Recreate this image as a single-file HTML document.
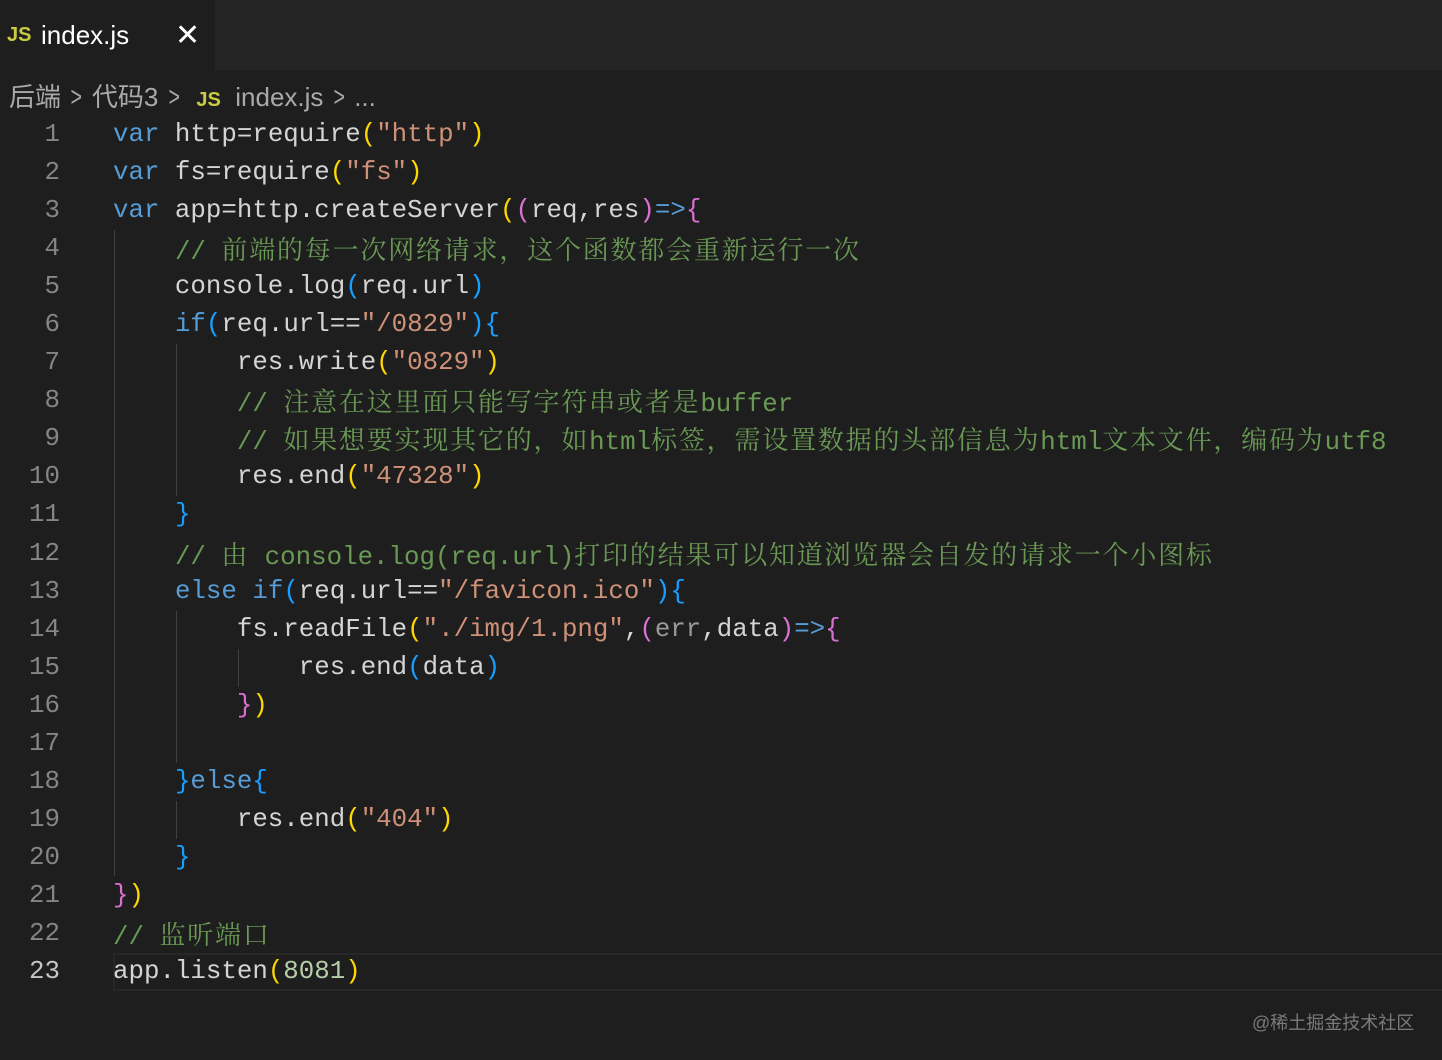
<!DOCTYPE html>
<html><head><meta charset="utf-8"><style>
body{margin:0;width:1442px;height:1060px;background:#1e1e1e;overflow:hidden;position:relative;font-family:"Liberation Mono",monospace;}
.tabbar{position:absolute;left:0;top:0;width:1442px;height:70px;background:#252526}
.tab{position:absolute;left:0;top:0;width:215px;height:70px;background:#1e1e1e}
.ui{font-family:"Liberation Sans","Noto Sans CJK SC",sans-serif}
.js{color:#cbcb41;font-weight:bold;font-family:"Liberation Sans",sans-serif}
.ln{position:absolute;left:0;width:60px;text-align:right;color:#858585;font-size:25.8px;line-height:38px;height:38px}
.cl{position:absolute;left:113px;font-size:25.8px;line-height:38px;height:38px;white-space:pre;color:#d4d4d4}
.k{color:#569cd6}.s{color:#ce9178}.c{color:#6a9955}.n{color:#b5cea8}
.y{color:#ffd700}.p{color:#da70d6}.b{color:#179fff}.g{color:#9a9a9a}
.z{font-family:"Noto Serif CJK SC",serif;font-size:26px;letter-spacing:1.8px}
.gd{position:absolute;width:1px;background:#404040}
.ch{display:inline-block;transform:scaleX(0.7);font-size:28px}
</style></head><body>
<div class="tabbar"></div>
<div class="tab"></div>
<div class="ui" style="position:absolute;left:7px;top:24px;font-size:20px" ><span class="js">JS</span></div>
<div class="ui" style="position:absolute;left:41px;top:20px;font-size:26px;color:#fff">index.js</div>
<div class="ui" style="position:absolute;left:175px;top:18px;font-size:30px;color:#fff">✕</div>
<div class="ui" style="position:absolute;left:9px;top:77px;font-size:26px;color:#a9a9a9;white-space:pre">后端 <span class="ch">&gt;</span> 代码3 <span class="ch">&gt;</span>  <span class="js" style="font-size:20px">JS</span>  index.js <span class="ch">&gt;</span> ...</div>

<div class="gd" style="left:114px;top:230px;height:646px"></div>
<div class="gd" style="left:176px;top:344px;height:152px"></div>
<div class="gd" style="left:176px;top:611px;height:152px"></div>
<div class="gd" style="left:238px;top:649px;height:38px"></div>
<div class="gd" style="left:176px;top:801px;height:38px"></div>
<div style="position:absolute;left:113px;top:953px;width:1329px;height:34px;border:2px solid #282828;border-right:none"></div>

<div class="ln" style="top:116px">1</div><div class="cl" style="top:116px"><span class="k">var</span> http=require<span class="y">(</span><span class="s">"http"</span><span class="y">)</span></div>
<div class="ln" style="top:154px">2</div><div class="cl" style="top:154px"><span class="k">var</span> fs=require<span class="y">(</span><span class="s">"fs"</span><span class="y">)</span></div>
<div class="ln" style="top:192px">3</div><div class="cl" style="top:192px"><span class="k">var</span> app=http.createServer<span class="y">(</span><span class="p">(</span>req,res<span class="p">)</span><span class="k">=&gt;</span><span class="p">{</span></div>
<div class="ln" style="top:230px">4</div><div class="cl" style="top:230px">    <span class="c">// <span class="z">前端的每一次网络请求，这个函数都会重新运行一次</span></span></div>
<div class="ln" style="top:268px">5</div><div class="cl" style="top:268px">    console.log<span class="b">(</span>req.url<span class="b">)</span></div>
<div class="ln" style="top:306px">6</div><div class="cl" style="top:306px">    <span class="k">if</span><span class="b">(</span>req.url==<span class="s">"/0829"</span><span class="b">){</span></div>
<div class="ln" style="top:344px">7</div><div class="cl" style="top:344px">        res.write<span class="y">(</span><span class="s">"0829"</span><span class="y">)</span></div>
<div class="ln" style="top:382px">8</div><div class="cl" style="top:382px">        <span class="c">// <span class="z">注意在这里面只能写字符串或者是</span>buffer</span></div>
<div class="ln" style="top:420px">9</div><div class="cl" style="top:420px">        <span class="c">// <span class="z">如果想要实现其它的，如</span>html<span class="z">标签，需设置数据的头部信息为</span>html<span class="z">文本文件，编码为</span>utf8</span></div>
<div class="ln" style="top:458px">10</div><div class="cl" style="top:458px">        res.end<span class="y">(</span><span class="s">"47328"</span><span class="y">)</span></div>
<div class="ln" style="top:496px">11</div><div class="cl" style="top:496px">    <span class="b">}</span></div>
<div class="ln" style="top:535px">12</div><div class="cl" style="top:535px">    <span class="c">// <span class="z">由</span> console.log(req.url)<span class="z">打印的结果可以知道浏览器会自发的请求一个小图标</span></span></div>
<div class="ln" style="top:573px">13</div><div class="cl" style="top:573px">    <span class="k">else if</span><span class="b">(</span>req.url==<span class="s">"/favicon.ico"</span><span class="b">){</span></div>
<div class="ln" style="top:611px">14</div><div class="cl" style="top:611px">        fs.readFile<span class="y">(</span><span class="s">"./img/1.png"</span>,<span class="p">(</span><span class="g">err</span>,data<span class="p">)</span><span class="k">=&gt;</span><span class="p">{</span></div>
<div class="ln" style="top:649px">15</div><div class="cl" style="top:649px">            res.end<span class="b">(</span>data<span class="b">)</span></div>
<div class="ln" style="top:687px">16</div><div class="cl" style="top:687px">        <span class="p">}</span><span class="y">)</span></div>
<div class="ln" style="top:725px">17</div><div class="cl" style="top:725px"></div>
<div class="ln" style="top:763px">18</div><div class="cl" style="top:763px">    <span class="b">}</span><span class="k">else</span><span class="b">{</span></div>
<div class="ln" style="top:801px">19</div><div class="cl" style="top:801px">        res.end<span class="y">(</span><span class="s">"404"</span><span class="y">)</span></div>
<div class="ln" style="top:839px">20</div><div class="cl" style="top:839px">    <span class="b">}</span></div>
<div class="ln" style="top:877px">21</div><div class="cl" style="top:877px"><span class="p">}</span><span class="y">)</span></div>
<div class="ln" style="top:915px">22</div><div class="cl" style="top:915px"><span class="c">// <span class="z">监听端口</span></span></div>
<div class="ln" style="top:953px;color:#c6c6c6">23</div><div class="cl" style="top:953px">app.listen<span class="y">(</span><span class="n">8081</span><span class="y">)</span></div>

<div class="ui" style="position:absolute;left:1252px;top:1009px;font-size:18px;color:#7a7a7a">@稀土掘金技术社区</div>
</body></html>
